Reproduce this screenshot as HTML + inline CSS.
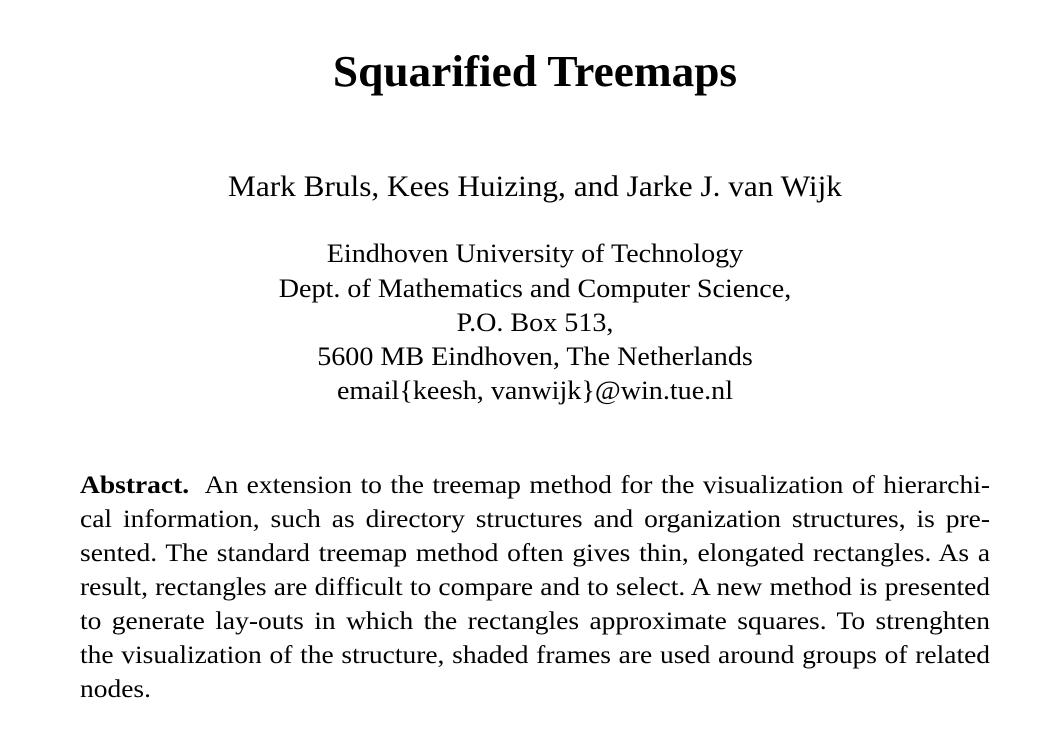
<!DOCTYPE html>
<html><head><meta charset="utf-8"><style>
body{margin:0;background:#fff;width:1056px;height:746px;overflow:hidden;position:relative;font-family:"Liberation Serif",serif;color:#000}
.c{position:absolute;left:0;width:1070px;text-align:center;white-space:nowrap;transform-origin:535px 0}
.t{font-size:44px;font-weight:bold;line-height:50px;top:47px;transform:scaleX(1.03)}
.a{font-size:29.5px;line-height:34px;top:170px;transform:scaleX(1.06)}
.f{font-size:26.5px;line-height:34px;transform:scaleX(1.06)}
.j{position:absolute;left:80px;width:850.5px;font-size:25.7px;line-height:34px;text-align:justify;text-align-last:justify;white-space:nowrap;transform:scaleX(1.07);transform-origin:0 0}
.l{text-align-last:left}
</style></head><body>
<div class="c t">Squarified Treemaps</div>
<div class="c a">Mark Bruls, Kees Huizing, and Jarke J. van Wijk</div>
<div class="c f" style="top:236px">Eindhoven University of Technology</div>
<div class="c f" style="top:271px">Dept. of Mathematics and Computer Science,</div>
<div class="c f" style="top:305px">P.O. Box 513,</div>
<div class="c f" style="top:339px">5600 MB Eindhoven, The Netherlands</div>
<div class="c f" style="top:373px">email{keesh, vanwijk}@win.tue.nl</div>
<div class="j" style="top:468px"><b>Abstract.</b>&nbsp; An extension to the treemap method for the visualization of hierarchi-</div>
<div class="j" style="top:502px">cal information, such as directory structures and organization structures, is pre-</div>
<div class="j" style="top:536px">sented. The standard treemap method often gives thin, elongated rectangles. As a</div>
<div class="j" style="top:570px">result, rectangles are difficult to compare and to select. A new method is presented</div>
<div class="j" style="top:604px">to generate lay-outs in which the rectangles approximate squares. To strenghten</div>
<div class="j" style="top:638px">the visualization of the structure, shaded frames are used around groups of related</div>
<div class="j l" style="top:672px">nodes.</div>
</body></html>
